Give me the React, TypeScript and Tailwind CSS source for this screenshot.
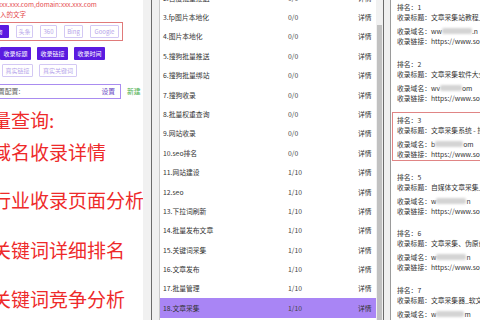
import React from "react";

const font = { fontFamily: '"Noto Sans CJK SC", "Noto Sans", sans-serif' };

const rows: [string, string, boolean?][] = [
  ["2.百度批量推送", "0/0"],
  ["3.fp图片本地化", "0/0"],
  ["4.图片本地化", "0/0"],
  ["5.搜狗批量推送", "0/0"],
  ["6.搜狗批量绑站", "0/0"],
  ["7.搜狗收录", "0/0"],
  ["8.批量权重查询", "0/0"],
  ["9.网站收录", "0/0"],
  ["10.seo排名", "0/0"],
  ["11.网站建设", "1/10"],
  ["12.seo", "1/10"],
  ["13.下拉词刷新", "1/10"],
  ["14.批量发布文章", "1/10"],
  ["15.关键词采集", "1/10"],
  ["16.文章发布", "1/10"],
  ["17.批量管理", "1/10"],
  ["18.文章采集", "1/10", true],
];

type Item = { rank: string; title: string; pre: string; blur: number; post: string; boxed?: boolean };
const items: Item[] = [
  { rank: "1", title: "文章采集站教程_百度经验", pre: "ww", blur: 30, post: ".n" },
  { rank: "2", title: "文章采集软件大全下载", pre: "wv", blur: 22, post: "om" },
  { rank: "3", title: "文章采集系统 - 搜狗百科", pre: "b", blur: 28, post: "om", boxed: true },
  { rank: "5", title: "自媒体文章采集_百度知道", pre: "w", blur: 30, post: "n" },
  { rank: "6", title: "文章采集、伪原创工具", pre: "w", blur: 30, post: "n" },
  { rank: "7", title: "文章采集器_软文素材", pre: "w", blur: 28, post: "m" },
];

function Outline({ children, w }: { children: React.ReactNode; w: string }) {
  return (
    <div className={`${w} h-[13px] flex items-center justify-center border border-[#d3c8f4] rounded-[1px] text-[6px] text-[#b6a5ea] shrink-0`}>
      {children}
    </div>
  );
}

function Filled({ children, w }: { children: React.ReactNode; w: string }) {
  return (
    <div className={`${w} h-[13px] flex items-center justify-center bg-[#5a1be0] rounded-[1px] text-[6px] text-white shrink-0`}>
      {children}
    </div>
  );
}

export default function App() {
  return (
    <div style={font} className="w-[480px] h-[320px] overflow-hidden flex bg-white">
      {/* left panel */}
      <div className="w-[143px] shrink-0 overflow-hidden bg-white flex flex-col">
        <div className="-mt-[1px] -ml-[2px] whitespace-nowrap text-[6.5px] leading-[10px] text-[#e5484d]">
          xxx.xxx.com,domain:xxx.xxx.com
        </div>
        <div className="whitespace-nowrap text-[6.5px] leading-[10px] text-[#e5484d]">入的文字</div>
        <div className="mt-[3px] -ml-[18px] w-[141px] h-[19px] border border-[#e07a7a] flex items-center gap-[7px] pl-[1px]">
          <Filled w="w-[25px]">搜狗</Filled>
          <Outline w="w-[17px]">头条</Outline>
          <Outline w="w-[17px]">360</Outline>
          <Outline w="w-[19px]">Bing</Outline>
          <Outline w="w-[29px]">Google</Outline>
        </div>
        <div className="mt-[6px] flex gap-[6px]">
          <Filled w="w-[31px]">收录标题</Filled>
          <Filled w="w-[31px]">收录链接</Filled>
          <Filled w="w-[31px]">收录时间</Filled>
        </div>
        <div className="mt-[4px] ml-[2px] flex gap-[6px]">
          <Outline w="w-[31px]">真实链接</Outline>
          <Outline w="w-[38px]">真实关键词</Outline>
        </div>
        <div className="mt-[7px] flex items-center">
          <div className="-ml-[3px] w-[124px] h-[15px] border border-[#a98cf0] flex items-center justify-between pr-[5px] text-[6.8px]">
            <span className="text-[#666]">置配置:</span>
            <span className="text-[#6a4bc4]">设置</span>
          </div>
          <span className="ml-[6px] text-[6.8px] text-[#4caf50]">新建</span>
        </div>
        <div className="mt-[5px] -ml-[8px] text-[19px] text-[#ee2a2a] whitespace-nowrap leading-[32px]">
          <div>量查询:</div>
          <div>域名收录详情</div>
          <div className="mt-[16px]">行业收录页面分析</div>
          <div className="mt-[18px]">关键词详细排名</div>
          <div className="mt-[17px]">关键词竞争分析</div>
        </div>
      </div>
      <div className="w-[8px] shrink-0 bg-[#f1f1f1]" />
      <div className="w-px shrink-0 bg-[#6b6b6b]" />
      <div className="w-[7px] shrink-0 bg-[#f0f0f0]" />
      <div className="w-px shrink-0 bg-[#c9c9c9]" />

      {/* middle list */}
      <div className="w-[216px] shrink-0 overflow-hidden bg-white">
        <div className="-mt-[12px]">
          {rows.map(([name, count, hi]) => (
            <div
              key={name}
              className={`h-[19.4px] flex items-center pl-[3px] text-[6.8px] text-[#333] whitespace-nowrap ${hi ? "bg-[#a985f5]" : ""}`}
            >
              <span className="w-[125px]">{name}</span>
              <span className="w-[70px] text-[#444]">{count}</span>
              <span>详情</span>
            </div>
          ))}
        </div>
      </div>
      <div className="w-[7px] shrink-0 bg-[#f1f1f1] flex flex-col items-center">
        <div className="mt-[25px] w-[5px] flex-1 bg-[#c1c1c1]" />
      </div>
      <div className="w-px shrink-0 bg-[#6b6b6b]" />
      <div className="w-[6px] shrink-0 bg-[#f0f0f0]" />
      <div className="w-px shrink-0 bg-[#9a9a9a]" />

      {/* right panel */}
      <div className="flex-1 overflow-hidden bg-white">
        <div className="-mt-[1px] flex flex-col gap-[7.5px] text-[6.8px] leading-[10px] text-[#333] whitespace-nowrap">
          {items.map((it) => (
            <div
              key={it.rank}
              className={`ml-[1px] w-[120px] border pl-[4px] pt-[2px] pb-[1px] ${it.boxed ? "border-[#e08585]" : "border-transparent"}`}
            >
              <div>排名：{it.rank}</div>
              <div>收录标题：{it.title}</div>
              <div className="mt-[4px] flex items-center">
                <span>收录域名：{it.pre}</span>
                <span
                  className="inline-block h-[6px] bg-[#d4d4d4] blur-[1px] rounded-[2px]"
                  style={{ width: it.blur }}
                />
                <span>{it.post}</span>
              </div>
              <div>收录链接：https://www.sogou.com/link?url=</div>
            </div>
          ))}
        </div>
      </div>
    </div>
  );
}
